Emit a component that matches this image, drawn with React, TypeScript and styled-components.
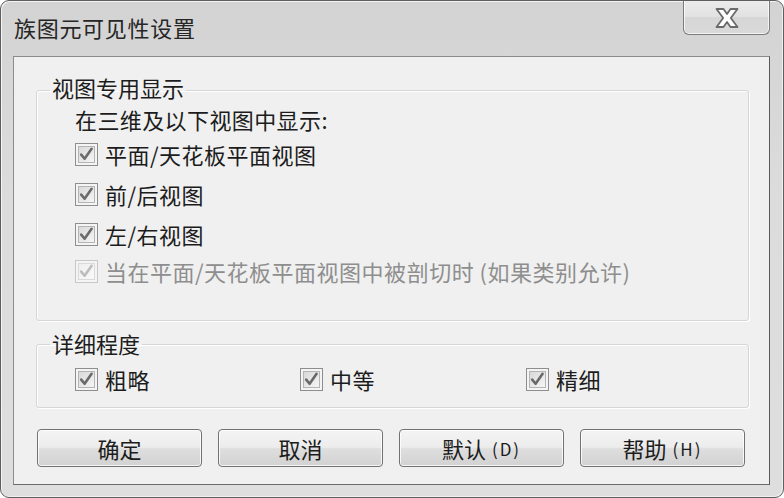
import React from "react";
import styled, { createGlobalStyle } from "styled-components";

const Global = createGlobalStyle`
  html, body { margin: 0; padding: 0; background: #ffffff; }
  body { width: 784px; height: 498px; overflow: hidden; }
  * { box-sizing: border-box; }
`;

const FONT = `"Noto Sans CJK SC", "Noto Sans", "Liberation Sans", sans-serif`;

const Window = styled.div`
  width: 784px;
  height: 498px;
  display: flex;
  flex-direction: column;
  border: 1px solid #5e5e5e;
  border-radius: 9px;
  background: linear-gradient(#d3d3d3, #dcdcdc 40%, #dedede);
  box-shadow: inset 1px 1px 0 #f4f4f4, inset -1px -1px 0 #f0f0f0;
  font-family: ${FONT};
  color: #1c1c1c;
  overflow: hidden;
`;

const TitleBar = styled.div`
  height: 55px;
  flex: none;
  display: flex;
  align-items: flex-start;
  justify-content: space-between;
  padding-left: 13px;
  padding-right: 13px;
`;

const Title = styled.div`
  font-size: 22px;
  letter-spacing: 0.7px;
  line-height: 28px;
  margin-top: 12px;
  color: #262626;
`;

const CloseButton = styled.div`
  width: 87px;
  height: 36px;
  margin-top: -2px;
  border: 1px solid #7c7c7c;
  border-top: none;
  border-radius: 0 0 6px 6px;
  background: linear-gradient(#ececec, #e2e2e2 50%, #d6d6d6 51%, #d9d9d9);
  box-shadow: inset 0 0 0 1px rgba(255, 255, 255, 0.7);
  display: flex;
  align-items: center;
  justify-content: center;
  padding-top: 2px;
`;

const Panel = styled.div`
  flex: 1;
  margin: 0 13px 12px 12px;
  border: 1px solid #8c8c8c;
  border-right-color: #5a5a5a;
  border-bottom-color: #6a6a6a;
  background: #f0f0f0;
  padding: 18px 20px 0 22px;
  display: flex;
  flex-direction: column;
`;

const Group = styled.fieldset<{ $h: number; $mt?: number }>`
  margin: ${(p) => p.$mt ?? 0}px 0 0 0;
  height: ${(p) => p.$h}px;
  border: 1px solid #d6d6d6;
  border-radius: 3px;
  box-shadow: inset 1px 1px 0 #ffffff, 1px 1px 0 #ffffff;
  padding: 0 0 0 38px;
  min-width: 0;
`;

const Legend = styled.legend<{ $pb: number }>`
  font-size: 22px;
  line-height: 24px;
  padding: 0 2px ${(p) => p.$pb}px 2px;
  margin-left: -25px;
  color: #1c1c1c;
`;

const Intro = styled.div`
  font-size: 22px;
  letter-spacing: 0.4px;
  line-height: 29px;
  height: 29px;
`;

const Row = styled.div<{ $h: number }>`
  height: ${(p) => p.$h}px;
  display: flex;
  align-items: center;
`;

const Option = styled.label<{ $disabled?: boolean }>`
  display: flex;
  align-items: center;
  gap: 7px;
  font-size: 22px;
  letter-spacing: 0.5px;
  line-height: 26px;
  color: ${(p) => (p.$disabled ? "#8e8e8e" : "#1c1c1c")};
`;

const DetailGrid = styled.div`
  height: 44px;
  display: grid;
  grid-template-columns: 225px 226px 200px;
  align-items: center;
`;

const ButtonRow = styled.div`
  margin-top: 21px;
  margin-left: 1px;
  display: grid;
  grid-template-columns: repeat(4, 165px);
  column-gap: 16px;
`;

const Button = styled.div`
  height: 38px;
  border: 1px solid #727272;
  border-radius: 4px;
  background: linear-gradient(#f4f4f4, #ececec 48%, #dedede 52%, #d2d2d2);
  box-shadow: inset 0 0 0 1px rgba(255, 255, 255, 0.8);
  display: flex;
  align-items: center;
  justify-content: center;
  font-size: 22px;
  color: #1c1c1c;
`;

const Accel = styled.span`
  margin-left: 6px;
  font-size: 17px;
  letter-spacing: 2px;
`;

const CheckBox: React.FC<{ disabled?: boolean }> = ({ disabled }) => {
  const outer = disabled ? "#c8c8c8" : "#8e8e8e";
  const inner = disabled ? "#dadada" : "#b4b4b4";
  const mark = disabled ? "#bdbdbd" : "#6a6a6a";
  const id = disabled ? "cbd" : "cb";
  return (
    <svg width="23" height="23" viewBox="0 0 23 23">
      <defs>
        <linearGradient id={id} x1="0" y1="0" x2="1" y2="1">
          <stop offset="0" stopColor={disabled ? "#eeeeee" : "#d8d8d8"} />
          <stop offset="1" stopColor={disabled ? "#fafafa" : "#f6f6f6"} />
        </linearGradient>
      </defs>
      <rect x="0.5" y="0.5" width="22" height="22" fill="#f4f4f4" stroke={outer} />
      <rect x="3.5" y="3.5" width="16" height="16" fill={`url(#${id})`} stroke={inner} />
      <path
        d="M6.2 11.6 L9.6 15.8 L16.6 5.8"
        fill="none"
        stroke={mark}
        strokeWidth="2.6"
        strokeLinecap="round"
        strokeLinejoin="round"
      />
    </svg>
  );
};

const CloseGlyph = () => (
  <svg width="26" height="22" viewBox="0 0 26 22">
    <path
      d="M2.5 2 H9.5 L13 7 L16.5 2 H23.5 L16.8 11 L23.5 20 H16.5 L13 15 L9.5 20 H2.5 L9.2 11 Z"
      fill="#ffffff"
      stroke="#6a6a6a"
      strokeWidth="1.8"
      strokeLinejoin="round"
    />
  </svg>
);

export default function App() {
  return (
    <>
      <Global />
      <Window>
        <TitleBar>
          <Title>族图元可见性设置</Title>
          <CloseButton>
            <CloseGlyph />
          </CloseButton>
        </TitleBar>
        <Panel>
          <Group $h={246}>
            <Legend $pb={6}>视图专用显示</Legend>
            <Intro>在三维及以下视图中显示:</Intro>
            <Row $h={40}>
              <Option>
                <CheckBox />
                平面/天花板平面视图
              </Option>
            </Row>
            <Row $h={40}>
              <Option>
                <CheckBox />
                前/后视图
              </Option>
            </Row>
            <Row $h={40}>
              <Option>
                <CheckBox />
                左/右视图
              </Option>
            </Row>
            <Row $h={34}>
              <Option $disabled>
                <CheckBox disabled />
                当在平面/天花板平面视图中被剖切时 (如果类别允许)
              </Option>
            </Row>
          </Group>
          <Group $h={77} $mt={10}>
            <Legend $pb={2}>详细程度</Legend>
            <DetailGrid>
              <Option>
                <CheckBox />
                粗略
              </Option>
              <Option>
                <CheckBox />
                中等
              </Option>
              <Option>
                <CheckBox />
                精细
              </Option>
            </DetailGrid>
          </Group>
          <ButtonRow>
            <Button>确定</Button>
            <Button>取消</Button>
            <Button>
              默认<Accel>(D)</Accel>
            </Button>
            <Button>
              帮助<Accel>(H)</Accel>
            </Button>
          </ButtonRow>
        </Panel>
      </Window>
    </>
  );
}
